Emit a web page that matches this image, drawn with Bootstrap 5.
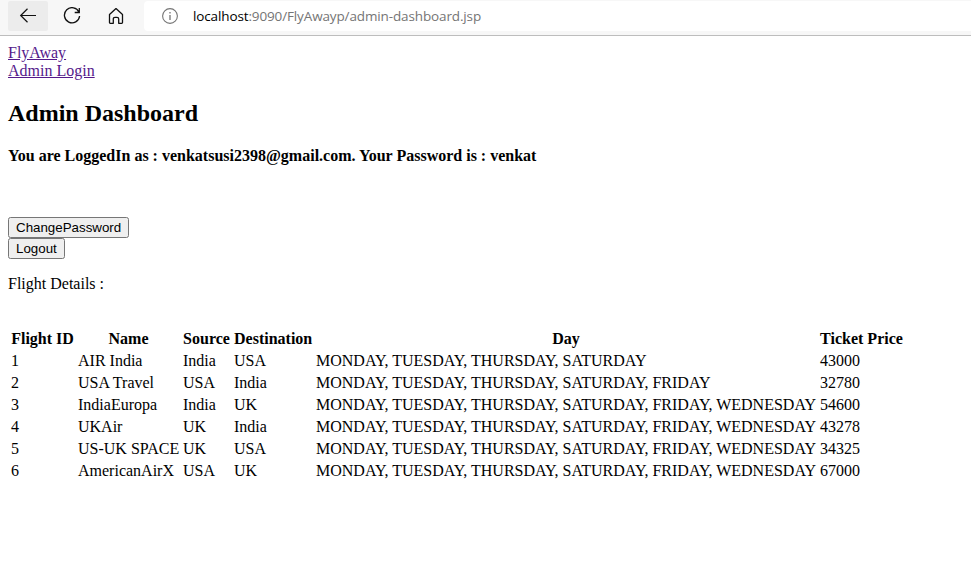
<!DOCTYPE html>
<html lang="en">
<head>
<meta charset="utf-8">
<meta name="viewport" content="width=device-width, initial-scale=1">
<title>Admin Dashboard</title>
<link href="https://cdn.jsdelivr.net/npm/bootstrap@5.3.0/dist/css/bootstrap.min.css" rel="stylesheet">
<style>
body{font:16px/18px "Liberation Serif","Times New Roman",serif;color:#000;background:#fff;overflow:hidden}
.toolbar{height:36px;background:#f7f7f7;border-bottom:1px solid #bdbdbd;padding-left:8px}
.tool{width:40px;height:30px;margin-top:1px;margin-right:4px;color:#111;border-radius:2px}
.tool.current{background:#ececec}
.address{height:30px;margin-top:1px;margin-left:4px;padding-left:18px;background:#fff;border-radius:4px 0 0 4px;font:13.5px/20px "Open Sans","Noto Sans",sans-serif;letter-spacing:-.13px;color:#757575}
.address .url{margin-left:15px;white-space:nowrap}
.address .host{color:#000}
svg{display:block;fill:none;stroke:currentColor}
.page{padding:8px 8px 0}
.page a{color:#551a8b;text-decoration:underline}
h1{font-size:24px;line-height:27px;font-weight:700;margin:20px 0 20px}
h2{font-size:16px;line-height:18px;font-weight:700;margin:0 0 52px}
.action{height:21px;padding:0 7px;border:1px solid #767676;border-radius:2.5px;background:#efefef;color:#000;font:13.333px/19px "Liberation Sans",Arial,sans-serif}
.flights{width:898px;table-layout:fixed;border-collapse:separate;border-spacing:2px;margin-top:34px;white-space:nowrap}
.flights th,.flights td{padding:1px;height:20px}
.flights th{text-align:center}
</style>
<script src="https://cdn.jsdelivr.net/npm/bootstrap@5.3.0/dist/js/bootstrap.bundle.min.js"></script>
</head>
<body>
<header class="toolbar d-flex">
  <div class="tool current d-flex align-items-center justify-content-center"><svg width="18" height="18" viewBox="0 0 18 18" stroke-width="1.2"><path d="M17 8.5H1.7M8.500 1.800l-6.800 6.700 6.800 6.700"/></svg></div>
  <div class="tool d-flex align-items-center justify-content-center"><svg width="18" height="18" viewBox="0 0 18 18" stroke-width="1.3"><path d="M16 5.2A7.6 7.6 0 1 0 16.6 9M16.300 1v4.500h-4.600"/></svg></div>
  <div class="tool d-flex align-items-center justify-content-center"><svg width="18" height="18" viewBox="0 0 18 18" stroke-width="1.3" stroke-linejoin="round"><path d="M2.500 7.600 9 1.600l6.500 6v7.900q0 .8-.8.8h-3V12q0-1.700-1.700-1.700H8Q6.300 10.300 6.300 12v4.300h-3q-.8 0-.8-.8z"/></svg></div>
  <div class="address flex-grow-1 d-flex align-items-center">
    <svg width="16" height="16" viewBox="0 0 16 16" stroke-width="1.100"><circle cx="8" cy="8" r="7.400"/><path d="M8 7v5M8 4v1.500" stroke-width="1.300"/></svg>
    <span class="url"><span class="host">localhost</span>:9090/FlyAwayp/admin-dashboard.jsp</span>
  </div>
</header>
<main class="page">
  <nav class="d-flex flex-column align-items-start"><a href="#">FlyAway</a><a href="#">Admin Login</a></nav>
  <h1>Admin Dashboard</h1>
  <h2>You are LoggedIn as : venkatsusi2398@gmail.com. Your Password is : venkat</h2>
  <div class="d-flex flex-column align-items-start">
    <button class="action" type="button">ChangePassword</button>
    <button class="action" type="button">Logout</button>
  </div>
  <p class="mt-3 mb-0">Flight Details :</p>
  <table class="flights">
    <colgroup><col style="width:65px"><col style="width:103px"><col style="width:49px"><col style="width:80px"><col style="width:502px"><col style="width:85px"></colgroup>
    <thead><tr><th>Flight ID</th><th>Name</th><th>Source</th><th>Destination</th><th>Day</th><th>Ticket Price</th></tr></thead>
    <tbody>
      <tr><td>1</td><td>AIR India</td><td>India</td><td>USA</td><td>MONDAY, TUESDAY, THURSDAY, SATURDAY</td><td>43000</td></tr>
      <tr><td>2</td><td>USA Travel</td><td>USA</td><td>India</td><td>MONDAY, TUESDAY, THURSDAY, SATURDAY, FRIDAY</td><td>32780</td></tr>
      <tr><td>3</td><td>IndiaEuropa</td><td>India</td><td>UK</td><td>MONDAY, TUESDAY, THURSDAY, SATURDAY, FRIDAY, WEDNESDAY</td><td>54600</td></tr>
      <tr><td>4</td><td>UKAir</td><td>UK</td><td>India</td><td>MONDAY, TUESDAY, THURSDAY, SATURDAY, FRIDAY, WEDNESDAY</td><td>43278</td></tr>
      <tr><td>5</td><td>US-UK SPACE</td><td>UK</td><td>USA</td><td>MONDAY, TUESDAY, THURSDAY, SATURDAY, FRIDAY, WEDNESDAY</td><td>34325</td></tr>
      <tr><td>6</td><td>AmericanAirX</td><td>USA</td><td>UK</td><td>MONDAY, TUESDAY, THURSDAY, SATURDAY, FRIDAY, WEDNESDAY</td><td>67000</td></tr>
    </tbody>
  </table>
</main>
</body>
</html>
